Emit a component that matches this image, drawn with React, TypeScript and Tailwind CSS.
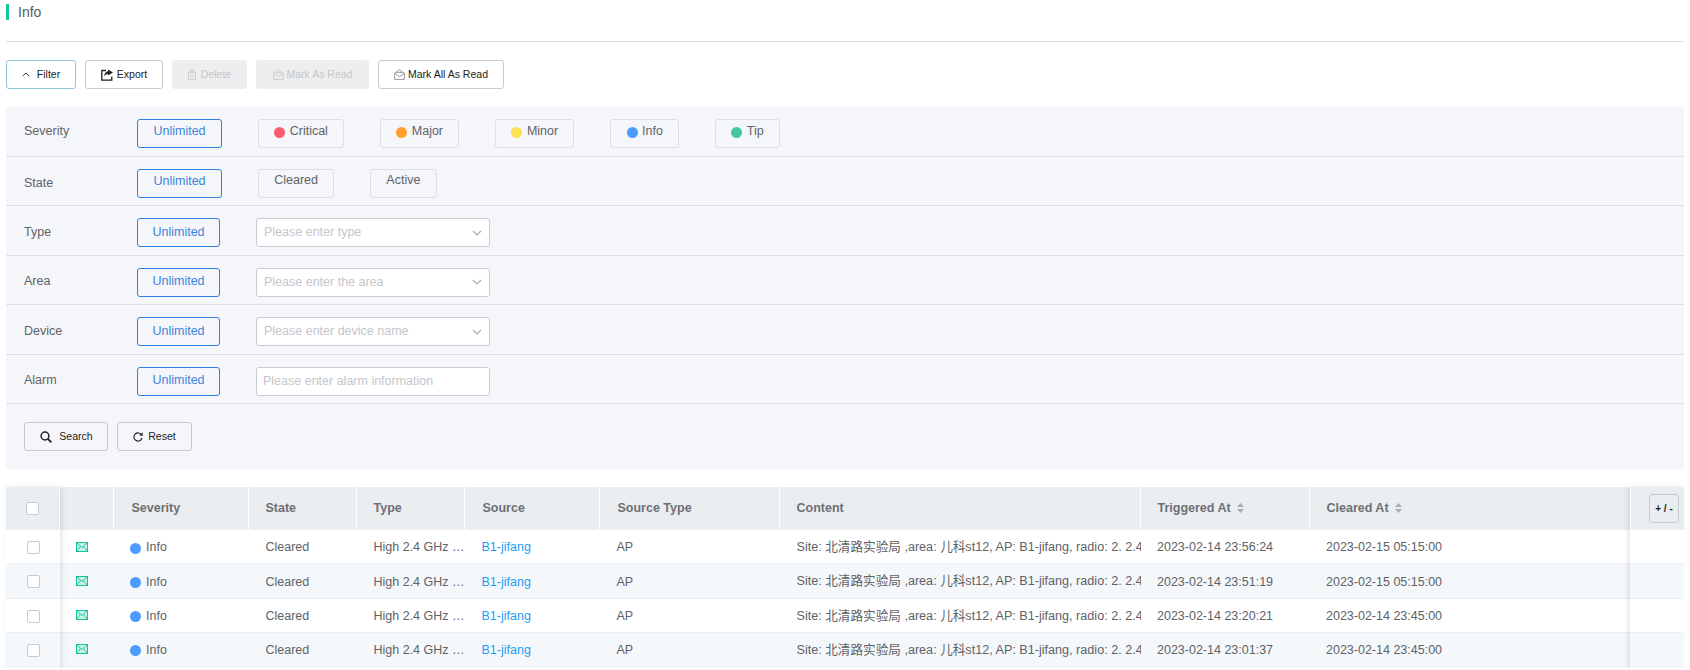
import React from "react";

const Dot = ({ c }: { c: string }) => <span className={`w-[11px] h-[11px] rounded-full shrink-0 ${c}`} />;

const ExportIcon = () => (
  <svg width="13" height="12" viewBox="0 0 13 12" className="shrink-0">
    <path d="M5 1.5H.8v9.7h10V7.5" fill="none" stroke="#222" strokeWidth="1.3" />
    <path d="M7 0.5l5 3-5 3V5C5 5 4 6 3.2 7.6 3.2 4.6 4.6 2.4 7 2.2z" fill="#222" />
  </svg>
);
const TrashIcon = () => (
  <svg width="8" height="11" viewBox="0 0 8 11" fill="none" stroke="#c9cbd0" strokeWidth="0.9" className="shrink-0">
    <path d="M.5 3.2h7v7.3h-7zM2.8 3.2V.6h2.4v2.6M2.8 5v3.5M5.2 5v3.5" />
  </svg>
);
const MailOpen = ({ c }: { c: string }) => (
  <svg width="11" height="11" viewBox="0 0 11 11" fill="none" stroke={c} strokeWidth="0.9" className="shrink-0">
    <path d="M.6 4.4 5.5.7l4.9 3.7v6H.6zM.6 4.4 5.5 7.6l4.9-3.2M2.3 3.4h6.4" />
  </svg>
);
const ChevronUp = () => (
  <svg width="8" height="5" viewBox="0 0 8 5" fill="none" stroke="#333" strokeWidth="1" className="shrink-0">
    <path d="M.7 4.2 4 1l3.3 3.2" />
  </svg>
);
const ChevronDown = () => (
  <svg width="10" height="6" viewBox="0 0 10 6" fill="none" stroke="#a8abb2" strokeWidth="1.2" className="shrink-0">
    <path d="M1 1l4 4 4-4" />
  </svg>
);
const SearchIcon = () => (
  <svg width="12" height="12" viewBox="0 0 12 12" fill="none" stroke="#222" strokeWidth="1.5" className="shrink-0">
    <circle cx="5" cy="5" r="3.9" />
    <path d="M7.9 7.9l3.4 3.4" strokeWidth="1.9" />
  </svg>
);
const ResetIcon = () => (
  <svg width="10" height="10" viewBox="0 0 10 10" fill="none" className="shrink-0">
    <path d="M8.6 3A4.1 4.1 0 1 0 9 6" stroke="#222" strokeWidth="1.1" />
    <path d="M6.2 3.4 9.7 3.7 9.4.2z" fill="#222" />
  </svg>
);
const MailIcon = () => (
  <svg width="12" height="10" viewBox="0 0 12 10" className="mb-[2px]">
    <rect x=".5" y=".5" width="11" height="9" fill="#c9f1e6" stroke="#12c39a" />
    <path d="M.8.8 6 5.6 11.2.8M.8 9.2 4.5 4.4M11.2 9.2 7.5 4.4" fill="none" stroke="#12c39a" strokeWidth=".9" />
  </svg>
);
const SortIcon = () => (
  <svg width="7" height="10" viewBox="0 0 7 10" fill="#a9acb1" className="shrink-0">
    <path d="M3.5 0 7 4H0zM3.5 10 0 6h7z" />
  </svg>
);

const ToolButton = ({ w, children, tone = "normal" }: { w: string; children: React.ReactNode; tone?: "normal" | "open" | "off" }) => {
  const toneClass =
    tone === "off"
      ? "bg-[#eeeeee] border-[#eeeeee] text-[#c4c6cb]"
      : tone === "open"
        ? "bg-white border-[#8ec5de] text-[#222222]"
        : "bg-white border-[#c8cad2] text-[#222222]";
  return (
    <button className={`h-[29px] ${w} border rounded-[3px] flex items-center justify-center gap-[3px] text-[10.5px] ${toneClass}`}>
      {children}
    </button>
  );
};

const Unlimited = ({ wide }: { wide?: boolean }) => (
  <button className={`mt-1 h-[29px] ${wide ? "w-[85px]" : "w-[83px]"} shrink-0 rounded-[3px] border border-[#2f7fdc] text-[#3d84dc] text-[12.5px] flex items-center justify-center`}>
    <span className={wide ? "mb-[4px]" : "mb-[1px]"}>Unlimited</span>
  </button>
);

const Chip = ({ label, dot }: { label: string; dot?: string }) => (
  <button className="mt-1 h-[29px] px-[15.2px] border border-[#dcdfe6] rounded-[3px] flex items-center gap-[4.5px] text-[12.5px] text-[#606266]">
    {dot && <span className="mb-[2px] flex"><Dot c={dot} /></span>}
    <span className="mb-[5px]">{label}</span>
  </button>
);

const SelectBox = ({ text, arrow = true, inset = "pl-[7px]" }: { text: string; arrow?: boolean; inset?: string }) => (
  <div className={`mt-1 h-[29px] w-[234px] ml-9 bg-white border border-[#c8cad4] rounded-[3px] flex items-center justify-between ${inset} pr-[7px] text-[12.5px] text-[#c4c6cc]`}>
    <span>{text}</span>
    {arrow && <ChevronDown />}
  </div>
);

const Row = ({ label, h, lift = "pt-[3px]", children, gap = "gap-9" }: { label: string; h: string; lift?: string; children: React.ReactNode; gap?: string }) => (
  <div className={`${h} border-b border-[#dcdfe6] flex items-center pl-[18px] ${gap}`}>
    <span className={`w-[113px] -mr-9 shrink-0 text-[12.5px] text-[#606266] ${lift}`}>{label}</span>
    {children}
  </div>
);

const Check = () => <span className="block w-[13px] h-[13px] bg-white border border-[#c8cad4] rounded-[2px]" />;

const rows = [
  ["2023-02-14 23:56:24", "2023-02-15 05:15:00"],
  ["2023-02-14 23:51:19", "2023-02-15 05:15:00"],
  ["2023-02-14 23:20:21", "2023-02-14 23:45:00"],
  ["2023-02-14 23:01:37", "2023-02-14 23:45:00"],
];

const headCell = "h-[43px] flex items-center gap-[6px] pl-[17px] pb-[1px] border-r border-white bg-[#ebeef1] font-bold text-[12.5px] text-[#6d7075]";
const rowCell = (i: number) =>
  `h-[34.25px] flex items-center pt-[2px] border-b border-[#edf0f4] overflow-hidden whitespace-nowrap ${i % 2 ? "bg-[#f5f8fb]" : "bg-white"}`;

export default function App() {
  return (
    <div className="h-[670px] overflow-hidden bg-white px-[6px] pt-1 flex flex-col [font-family:'Liberation_Sans','Noto_Sans_CJK_SC',sans-serif]">
      <div className="h-4 border-l-[3px] border-[#10c89b] pl-[9px] flex items-center text-[14px] text-[#555a60]">Info</div>
      <div className="mt-[21px] h-px bg-[#dcdfe6]" />

      <div className="mt-[18px] flex gap-[9px]">
        <ToolButton w="w-[70px]" tone="open"><span className="flex items-center gap-[7px]"><ChevronUp />Filter</span></ToolButton>
        <ToolButton w="w-[78px]"><ExportIcon />Export</ToolButton>
        <ToolButton w="w-[75px]" tone="off"><span className="flex items-center gap-[5px]"><TrashIcon />Delete</span></ToolButton>
        <ToolButton w="w-[113px]" tone="off"><MailOpen c="#c9cbd0" />Mark As Read</ToolButton>
        <ToolButton w="w-[126px]"><MailOpen c="#8a8d94" />Mark All As Read</ToolButton>
      </div>

      <div className="mt-[18px] bg-[#f5f6fa]">
        <Row label="Severity" h="h-[50px]" lift="pt-0">
          <Unlimited wide />
          <Chip label="Critical" dot="bg-[#fa5c72]" />
          <Chip label="Major" dot="bg-[#ff9f2e]" />
          <Chip label="Minor" dot="bg-[#ffe155]" />
          <Chip label="Info" dot="bg-[#4a9dff]" />
          <Chip label="Tip" dot="bg-[#47c4a4]" />
        </Row>
        <Row label="State" h="h-[49px]" lift="pt-[4px]">
          <Unlimited wide />
          <Chip label="Cleared" />
          <Chip label="Active" />
        </Row>
        <Row label="Type" h="h-[50px]" gap="gap-0">
          <span className="ml-9 flex"><Unlimited /></span>
          <SelectBox text="Please enter type" />
        </Row>
        <Row label="Area" h="h-[49px]" gap="gap-0">
          <span className="ml-9 flex"><Unlimited /></span>
          <SelectBox text="Please enter the area" />
        </Row>
        <Row label="Device" h="h-[50px]" gap="gap-0">
          <span className="ml-9 flex"><Unlimited /></span>
          <SelectBox text="Please enter device name" />
        </Row>
        <Row label="Alarm" h="h-[49px]" gap="gap-0">
          <span className="ml-9 flex"><Unlimited /></span>
          <SelectBox text="Please enter alarm information" arrow={false} inset="pl-[6px]" />
        </Row>
        <div className="flex gap-[9px] pl-[18px] py-[18px]">
          <button className="h-[29px] w-[84px] border border-[#c8cad2] rounded-[3px] flex items-center justify-center gap-[7px] pl-[1px] text-[10.5px] text-[#222222]">
            <SearchIcon />Search
          </button>
          <button className="h-[29px] w-[75px] border border-[#c8cad2] rounded-[3px] flex items-center justify-center gap-[5px] text-[10.5px] text-[#222222]">
            <ResetIcon />Reset
          </button>
        </div>
      </div>

      <div className="mt-[18px] flex-1 flex text-[12.5px] text-[#606266]">
        <div className="relative z-10 w-[54px] shrink-0 shadow-[2px_0_5px_rgba(0,0,0,0.1)]">
          <div className="h-[43px] bg-[#ebeef1] border-r border-white flex items-center pl-[20px]"><Check /></div>
          {rows.map((_, i) => (
            <div key={i} className={`${rowCell(i)} pl-[21px]`}><Check /></div>
          ))}
        </div>

        <div className="flex-1 min-w-0">
          <div className="grid grid-cols-[53.5px_135px_108px_108px_135px_180px_361px_169px_320.5px]">
            <div className={headCell} />
            <div className={`${headCell} pl-[18px]`}>Severity</div>
            <div className={headCell}>State</div>
            <div className={headCell}>Type</div>
            <div className={`${headCell} pl-[18px]`}>Source</div>
            <div className={`${headCell} pl-[18px]`}>Source Type</div>
            <div className={headCell}>Content</div>
            <div className={`${headCell} pl-[16px]`}>Triggered At<SortIcon /></div>
            <div className={`${headCell} pl-[16px] border-r-0`}>Cleared At<SortIcon /></div>
            {rows.map(([t, c], i) => (
              <React.Fragment key={t}>
                <div className={`${rowCell(i)} pl-[16px]`}><MailIcon /></div>
                <div className={`${rowCell(i)} pl-[16.5px] gap-[5px]`}><span className="mt-[1px] flex"><Dot c="bg-[#4a9dff]" /></span>Info</div>
                <div className={`${rowCell(i)} pl-[17px]`}>Cleared</div>
                <div className={`${rowCell(i)} pl-[17px]`}>High 2.4 GHz …</div>
                <div className={`${rowCell(i)} pl-[17px] text-[#1c9cf5]`}>B1-jifang</div>
                <div className={`${rowCell(i)} pl-[17px]`}>AP</div>
                <div className={`${rowCell(i)} pl-[17px] text-[12.62px]`}>Site: 北清路实验局 ,area: 儿科st12, AP: B1-jifang, radio: 2. 2.4</div>
                <div className={`${rowCell(i)} pl-[16.5px]`}>{t}</div>
                <div className={`${rowCell(i)} pl-[16.5px]`}>{c}</div>
              </React.Fragment>
            ))}
          </div>
        </div>

        <div className="relative z-10 w-[54px] shrink-0 shadow-[-2px_0_5px_rgba(0,0,0,0.1)]">
          <div className="h-[43px] bg-[#ebeef1] border-l border-white flex items-center justify-end pr-[5px]">
            <button className="w-[30px] h-[29px] border border-[#c8cad2] rounded-[3px] text-[10px] font-bold text-[#222222]">+ / -</button>
          </div>
          {rows.map((_, i) => (
            <div key={i} className={rowCell(i)} />
          ))}
        </div>
      </div>
    </div>
  );
}
